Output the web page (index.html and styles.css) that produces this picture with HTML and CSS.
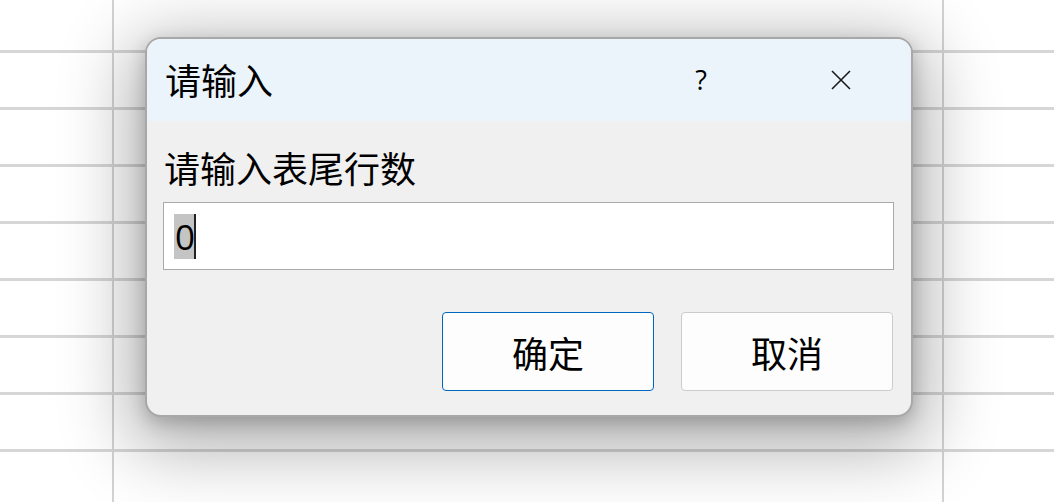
FILE: index.html
```html
<!DOCTYPE html>
<html lang="zh-CN">
<head>
<meta charset="utf-8">
<title>请输入</title>
<link rel="stylesheet" href="styles.css">
</head>
<body>
<div class="sheet"></div>
<div class="dialog">
  <div class="titlebar">
    <span class="title">请输入</span>
    <span class="help">?</span>
    <span class="close">
      <svg width="22" height="22" viewBox="0 0 22 22"><path d="M2 2 L20 20 M20 2 L2 20" stroke="#1a1a1a" stroke-width="1.6" fill="none"/></svg>
    </span>
  </div>
  <div class="content">
    <div class="label">请输入表尾行数</div>
    <div class="input"><span class="sel">0</span><span class="caret"></span></div>
    <div class="buttons">
      <button class="btn primary">确定</button>
      <button class="btn">取消</button>
    </div>
  </div>
</div>
</body>
</html>
```
FILE: styles.css
```css
html, body {
  margin: 0;
  padding: 0;
  width: 1054px;
  height: 502px;
  overflow: hidden;
  background: #ffffff;
  font-family: "Noto Sans CJK SC", "Noto Sans", sans-serif;
}
.sheet {
  position: absolute;
  inset: 0;
  background-image:
    linear-gradient(to right, transparent 112px, #d3d3d3 112px, #d3d3d3 114px, transparent 114px, transparent 942px, #d3d3d3 942px, #d3d3d3 944px, transparent 944px),
    repeating-linear-gradient(to bottom, transparent 0, transparent 50px, #d6d6d6 50px, #d6d6d6 53px, transparent 53px, transparent 57px);
}
.dialog {
  position: absolute;
  left: 145px;
  top: 37px;
  width: 768px;
  height: 380px;
  box-sizing: border-box;
  border: 2px solid #a8a8a8;
  border-radius: 16px;
  background: #f0f0f0;
  overflow: hidden;
  display: flex;
  flex-direction: column;
  box-shadow: 0 18px 70px 16px rgba(0, 0, 0, 0.30), 0 6px 18px rgba(0, 0, 0, 0.20);
}
.titlebar {
  height: 82px;
  background: #ebf4fb;
  display: flex;
  align-items: center;
  padding-left: 18px;
  color: #000;
}
.title {
  font-size: 36px;
  flex: 1;
  line-height: 1;
  margin-top: -2px;
}
.help {
  font-family: "Open Sans", "Noto Sans", sans-serif;
  font-size: 27px;
  width: 22px;
  text-align: center;
  margin-right: 118px;
  margin-top: -2px;
}
.close {
  display: flex;
  margin-right: 59px;
}
.content {
  flex: 1;
  display: flex;
  flex-direction: column;
  padding: 23px 17px 0 16px;
}
.label {
  font-size: 36px;
  line-height: 46px;
  color: #000;
  padding-left: 1px;
}
.input {
  margin-top: 12px;
  height: 68px;
  box-sizing: border-box;
  border: 1px solid #a9a9a9;
  background: #fff;
  display: flex;
  align-items: center;
  padding-left: 10px;
}
.sel {
  background: #c4c4c4;
  font-family: "Open Sans", "Noto Sans", sans-serif;
  font-size: 35px;
  line-height: 45px;
  height: 45px;
  padding: 0 1px;
  color: #000;
}
.caret {
  width: 2px;
  height: 45px;
  background: #222;
  margin-left: -2px;
}
.buttons {
  display: flex;
  justify-content: flex-end;
  gap: 27px;
  margin-top: 42px;
  padding-right: 1px;
}
.btn {
  width: 212px;
  height: 79px;
  box-sizing: border-box;
  border: 1px solid #cccccc;
  border-radius: 4px;
  background: #fdfdfd;
  font-family: "Noto Sans CJK SC", sans-serif;
  font-size: 36px;
  color: #000;
  padding: 0;
}
.btn.primary {
  border-color: #0067c0;
}
```
